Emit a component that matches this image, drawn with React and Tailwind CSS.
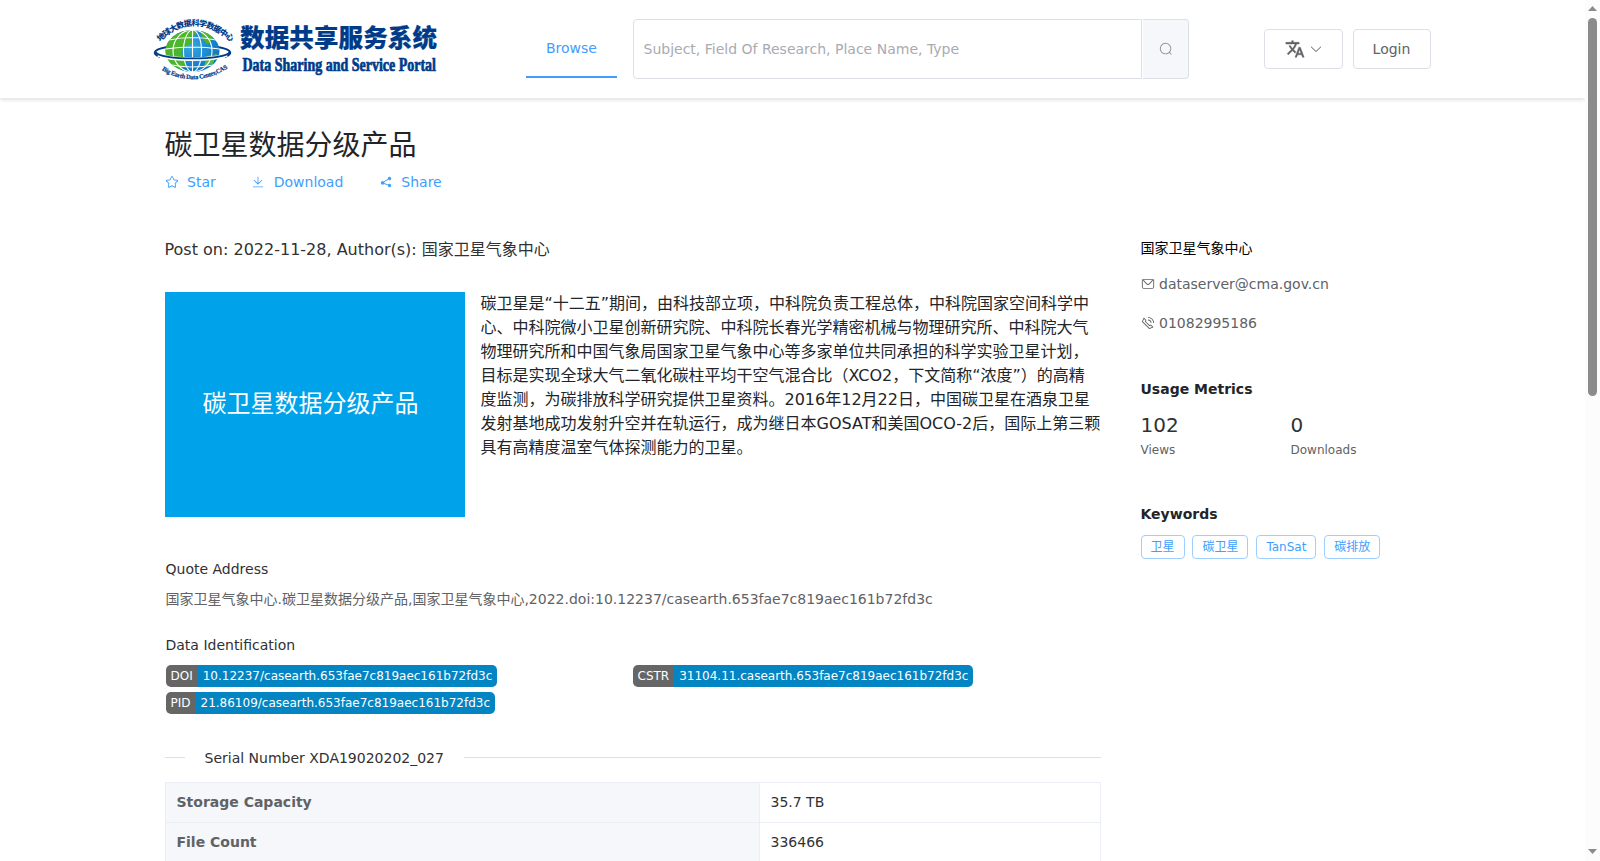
const icons = {
  search:
    "m795.904 750.72 124.992 124.928a32 32 0 0 1-45.248 45.248L750.656 795.904a416 416 0 1 1 45.248-45.248zM480 832a352 352 0 1 0 0-704 352 352 0 0 0 0 704z",
  arrowDown:
    "M831.872 340.864 512 652.672 192.128 340.864a30.592 30.592 0 0 0-42.752 0 29.12 29.12 0 0 0 0 41.6L489.664 714.24a32 32 0 0 0 44.672 0l340.288-331.712a29.12 29.12 0 0 0 0-41.728 30.592 30.592 0 0 0-42.752 0z",
  star:
    "m512 747.84 228.16 119.936a6.4 6.4 0 0 0 9.28-6.72l-43.52-254.08 184.512-179.904a6.4 6.4 0 0 0-3.52-10.88l-255.104-37.12L517.76 147.904a6.4 6.4 0 0 0-11.52 0L392.192 379.072l-255.104 37.12a6.4 6.4 0 0 0-3.52 10.88L318.08 606.976l-43.584 254.08a6.4 6.4 0 0 0 9.28 6.72L512 747.84zM313.6 924.48a70.4 70.4 0 0 1-102.144-74.24l37.888-220.928L88.96 472.96A70.4 70.4 0 0 1 128 352.896l221.76-32.256 99.2-200.96a70.4 70.4 0 0 1 126.208 0l99.2 200.96 221.824 32.256a70.4 70.4 0 0 1 39.04 120.064L774.72 629.376l37.888 220.928a70.4 70.4 0 0 1-102.144 74.24L512 820.096l-198.4 104.32z",
  download:
    "M160 832h704a32 32 0 1 1 0 64H160a32 32 0 1 1 0-64zm384-253.696 236.288-236.352 45.248 45.248L508.8 704 192 387.2l45.248-45.248L480 584.704V128h64v450.304z",
  share:
    "m679.872 348.8-301.76 188.608a127.808 127.808 0 0 1 5.12 52.16l279.936 104.96a128 128 0 1 1-22.464 59.904l-279.872-104.96a128 128 0 1 1-16.64-166.272l301.696-188.608a128 128 0 1 1 33.92 54.272z",
  message:
    "M128 224v512a64 64 0 0 0 64 64h640a64 64 0 0 0 64-64V224H128zm0-64h768a64 64 0 0 1 64 64v512a128 128 0 0 1-128 128H192A128 128 0 0 1 64 736V224a64 64 0 0 1 64-64z M904 224 656.512 506.88a192 192 0 0 1-289.024 0L120 224h784zm-698.944 0 210.56 240.704a128 128 0 0 0 192.704 0L818.944 224H205.056z",
  phone:
    "M79.36 432.256 591.744 944.64a32 32 0 0 0 35.2 6.784l253.44-108.544a32 32 0 0 0 9.984-52.032l-153.856-153.92a32 32 0 0 0-36.928-6.016l-69.888 34.944L358.08 394.24l35.008-69.888a32 32 0 0 0-5.952-36.928L233.152 133.568a32 32 0 0 0-52.032 10.048L72.512 397.056a32 32 0 0 0 6.784 35.2zm60.48-29.952 81.536-190.08L325.568 316.48l-24.64 49.216-20.608 41.216 32.576 32.64 271.552 271.552 32.64 32.64 41.216-20.672 49.28-24.576 104.192 104.128-190.08 81.472L139.84 402.304zM512 320v-64a256 256 0 0 1 256 256h-64a192 192 0 0 0-192-192zm0-192V64a448 448 0 0 1 448 448h-64a384 384 0 0 0-384-384z",
};

const Icon = ({ name, className = "w-3.5 h-3.5" }) => (
  <svg className={`shrink-0 ${className}`} viewBox="0 0 1024 1024" fill="currentColor">
    <path d={icons[name]} />
  </svg>
);

const TranslateIcon = () => (
  <svg className="w-5 h-5 shrink-0" viewBox="0 0 24 24" fill="currentColor" stroke="currentColor" strokeWidth="0.5">
    <path d="M12.87 15.07l-2.54-2.51.03-.03A17.52 17.52 0 0 0 14.07 6H17V4h-7V2H8v2H1v1.99h11.17C11.5 7.92 10.44 9.75 9 11.35 8.07 10.32 7.3 9.19 6.69 8h-2c.73 1.63 1.73 3.17 2.98 4.56l-5.09 5.02L4 19l5-5 3.11 3.11.76-2.04zM18.5 10h-2L12 22h2l1.12-3h4.75L21 22h2l-4.5-12zm-2.62 7l1.62-4.33L19.12 17h-3.24z" />
  </svg>
);

const Logo = () => (
  <svg className="w-[290px] h-[70px] shrink-0 overflow-visible" viewBox="0 0 290 70">
    <defs>
      <radialGradient id="sea" cx="45%" cy="40%" r="65%">
        <stop offset="0%" stopColor="#35a8e0" />
        <stop offset="100%" stopColor="#0b6fc0" />
      </radialGradient>
      <clipPath id="globe">
        <ellipse cx="41.5" cy="37" rx="27" ry="21" />
      </clipPath>
      <path id="topArc" d="M9 28 Q42 -4.5 80 28" />
      <path id="bottomArc" d="M9 55 Q42 76 77 54" />
    </defs>
    <path d="M16 33 C0 36 2 40 9 43 M67 33 C83 36 81 40 74 43" fill="none" stroke="#003b8a" strokeWidth="2" />
    <ellipse cx="41.5" cy="37" rx="27" ry="21" fill="url(#sea)" />
    <g clipPath="url(#globe)">
      <path d="M14 16 L43 15 L45 20 L39 24 L41 29 L33 33 L30 39 L35 44 L34 52 L27 57 L12 46 Z" fill="#4cb52c" />
      <path d="M49 17 L57 17 L62 24 L57 31 L52 25 Z" fill="#4cb52c" />
      <path d="M56 42 L66 40 L62 50 L53 52 Z" fill="#54b948" />
      <g fill="none" stroke="#fff" strokeWidth="1.1">
        <ellipse cx="41.5" cy="37" rx="9" ry="21" />
        <ellipse cx="41.5" cy="37" rx="19.5" ry="21" />
        <path d="M41.5 16v42M18 26q23.5-5 47 0M14.5 35q27-4 54 0M21 51q20.5 4 41 0" />
      </g>
    </g>
    <path d="M7 41 C22 46.5 61 46.5 76 41" fill="none" stroke="#fff" strokeWidth="3.6" />
    <path d="M5 38 C7 46.5 76 46.5 78.5 38" fill="none" stroke="#003b8a" strokeWidth="1.8" />
    <g fill="#003b8a" fontWeight="900">
      <text fontSize="8" fontFamily="'Noto Sans CJK SC', sans-serif">
        <textPath href="#topArc" textLength="80">
          地球大数据科学数据中心
        </textPath>
      </text>
      <text fontSize="6.4" fontWeight="700" stroke="#003b8a" strokeWidth="0.2" fontFamily="'Liberation Serif', serif">
        <textPath href="#bottomArc" startOffset="2" textLength="70">
          Big Earth Data Center,CAS
        </textPath>
      </text>
      <text
        x="89"
        y="33"
        fontSize="24.5"
        textLength="197"
        stroke="#003b8a"
        strokeWidth="0.2"
        fontFamily="'Noto Sans CJK SC', sans-serif"
      >
        数据共享服务系统
      </text>
      <text
        x="91.5"
        y="56.5"
        fontSize="18"
        fontWeight="700"
        textLength="193.5"
        lengthAdjust="spacingAndGlyphs"
        stroke="#003b8a"
        strokeWidth="0.7"
        fontFamily="'Liberation Serif', serif"
      >
        Data Sharing and Service Portal
      </text>
    </g>
  </svg>
);

const Header = () => (
  <header className="h-[98px] shrink-0 flex items-center pl-[151px] shadow-[0_2px_4px_rgba(0,0,0,0.12)]">
    <Logo />
    <nav className="ml-[85px] w-[91px] h-[59px] -mt-[1px] flex items-center justify-center pt-px border-b-2 border-[#409eff] text-sm text-[#409eff]">
      Browse
    </nav>
    <div className="ml-4 w-[556px] h-[60px] flex">
      <div className="w-[509px] flex items-center pl-[9.5px] rounded-l border border-[#dcdfe6] text-sm text-[#a8abb2]">
        Subject, Field Of Research, Place Name, Type
      </div>
      <div className="flex-1 ml-px flex items-center justify-center rounded-r border border-l-0 border-[#dcdfe6] bg-[#f5f7fa] text-[#909399]">
        <Icon name="search" />
      </div>
    </div>
    <button className="ml-[75px] w-[79px] h-10 flex items-center justify-center rounded border border-[#dcdfe6] text-[#606266]">
      <TranslateIcon />
      <Icon name="arrowDown" className="w-3.5 h-3.5 ml-1" />
    </button>
    <button className="ml-2.5 w-[78px] h-10 pr-px rounded border border-[#dcdfe6] text-sm text-[#606266]">Login</button>
  </header>
);

const actions = [
  { icon: "star", label: "Star" },
  { icon: "download", label: "Download" },
  { icon: "share", label: "Share" },
];

const Badge = ({ label, value }) => (
  <div className="flex w-fit h-[22px] rounded-[5px] overflow-hidden text-xs leading-[21px] text-white">
    <span className="bg-[#666] px-[5px] pt-px">{label}</span>
    <span className="bg-[#0385c3] px-[5px] pt-px">{value}</span>
  </div>
);

const rows = [
  ["Storage Capacity", "35.7 TB"],
  ["File Count", "336466"],
];

const Detail = () => (
  <main className="w-[936px] shrink-0">
    <div className="mt-10 text-base leading-6 text-[#303133]">Post on: 2022-11-28, Author(s): 国家卫星气象中心</div>

    <div className="mt-[30px] flex gap-4 h-[225px]">
      <div className="w-[300px] shrink-0 bg-[#00a2e9] flex items-center justify-center text-2xl text-white pb-px pr-2">
        <span>碳卫星数据分级产品</span>
      </div>
      <p className="w-[622px] shrink-0 text-base leading-6 text-[#212529]">
        碳卫星是“十二五”期间，由科技部立项，中科院负责工程总体，中科院国家空间科学中
        <br />
        心、中科院微小卫星创新研究院、中科院长春光学精密机械与物理研究所、中科院大气
        <br />
        物理研究所和中国气象局国家卫星气象中心等多家单位共同承担的科学实验卫星计划，
        <br />
        目标是实现全球大气二氧化碳柱平均干空气混合比（XCO2，下文简称“浓度”）的高精
        <br />
        度监测，为碳排放科学研究提供卫星资料。2016年12月22日，中国碳卫星在酒泉卫星
        <br />
        发射基地成功发射升空并在轨运行，成为继日本GOSAT和美国OCO-2后，国际上第三颗
        <br />
        具有高精度温室气体探测能力的卫星。
      </p>
    </div>

    <div className="mt-[42px] pl-px text-sm leading-5 text-[#303133]">
      <div>Quote Address</div>
      <div className="mt-2.5 text-[#606266]">
        国家卫星气象中心.碳卫星数据分级产品,国家卫星气象中心,2022.doi:10.12237/casearth.653fae7c819aec161b72fd3c
      </div>
      <div className="mt-[26px]">Data Identification</div>
    </div>
    <div className="mt-[10px] pl-px pr-px grid grid-cols-2 gap-y-[5px]">
      <Badge label="DOI" value="10.12237/casearth.653fae7c819aec161b72fd3c" />
      <Badge label="CSTR" value="31104.11.casearth.653fae7c819aec161b72fd3c" />
      <Badge label="PID" value="21.86109/casearth.653fae7c819aec161b72fd3c" />
    </div>

    <div className="mt-[33px] h-5 flex items-center text-sm text-[#303133]">
      <div className="w-5 h-px bg-[#dcdfe6]"></div>
      <span className="px-5 pt-0.5">Serial Number XDA19020202_027</span>
      <div className="flex-1 h-px bg-[#dcdfe6]"></div>
    </div>

    <div className="mt-[15px] border-t border-l border-[#ebeef5] text-sm">
      {rows.map(([label, value]) => (
        <div key={label} className="flex h-10">
          <div className="w-[594px] pl-[11px] pb-px flex items-center bg-[#f5f7fa] border-r border-b border-[#ebeef5] font-bold text-[#606266]">
            {label}
          </div>
          <div className="flex-1 pl-[11px] pb-px flex items-center border-r border-b border-[#ebeef5] text-[#303133]">{value}</div>
        </div>
      ))}
    </div>
  </main>
);

const keywords = ["卫星", "碳卫星", "TanSat", "碳排放"];

const Sidebar = () => (
  <aside className="w-[300px] ml-10 text-sm leading-5 text-[#606266]">
    <div className="mt-10 text-black">国家卫星气象中心</div>
    <div className="mt-4 flex items-center gap-[4.5px]">
      <Icon name="message" />
      dataserver@cma.gov.cn
    </div>
    <div className="mt-[19px] flex items-center gap-[4.5px]">
      <Icon name="phone" />
      01082995186
    </div>

    <h4 className="mt-[46px] font-bold text-[#212529]">Usage Metrics</h4>
    <div className="mt-3 flex">
      <div className="w-[150px]">
        <div className="text-xl leading-7 text-[#303133]">102</div>
        <div className="mt-px text-xs leading-5">Views</div>
      </div>
      <div>
        <div className="text-xl leading-7 text-[#303133]">0</div>
        <div className="mt-px text-xs leading-5">Downloads</div>
      </div>
    </div>

    <h4 className="mt-11 font-bold text-[#212529]">Keywords</h4>
    <div className="mt-[11px] flex gap-[7.95px]">
      {keywords.map((keyword) => (
        <span key={keyword} className="h-6 px-[9px] flex items-center rounded border border-[#9fceff] text-xs text-[#409eff]">
          {keyword}
        </span>
      ))}
    </div>
  </aside>
);

const Scrollbar = () => (
  <div className="w-[15px] h-full shrink-0 flex flex-col items-center bg-[#fcfcfc] text-[#8b8b8b]">
    <svg className="w-[9px] h-[5px] mt-1.5" viewBox="0 0 9 5">
      <path d="M4.5 0 9 5H0z" fill="currentColor" />
    </svg>
    <div className="w-[9px] h-[378px] mt-[7px] rounded-full bg-[#8b8b8b]"></div>
    <svg className="w-[9px] h-[5px] mt-auto mb-[7px]" viewBox="0 0 9 5">
      <path d="M0 0h9L4.5 5z" fill="currentColor" />
    </svg>
  </div>
);

const App = () => {
  return (
    <div
      lang="zh-CN"
      className="w-[1600px] h-[861px] flex overflow-hidden bg-white font-['DejaVu_Sans','Noto_Sans_CJK_SC',sans-serif]"
    >
      <div className="flex-1 min-w-0 h-full flex flex-col overflow-hidden">
        <Header />
        <div className="pl-[164.5px]">
          <h1 className="mt-[31px] text-[28px] leading-[34px] text-[#212529]">碳卫星数据分级产品</h1>
          <div className="mt-[9px] flex gap-[35.5px] text-sm leading-5 text-[#409eff]">
            {actions.map(({ icon, label }) => (
              <a key={label} href="#" className="flex items-center gap-[8.5px]">
                <Icon name={icon} />
                {label}
              </a>
            ))}
          </div>
          <div className="mt-[6px] flex">
            <Detail />
            <Sidebar />
          </div>
        </div>
      </div>
      <Scrollbar />
    </div>
  );
};

export default App;
